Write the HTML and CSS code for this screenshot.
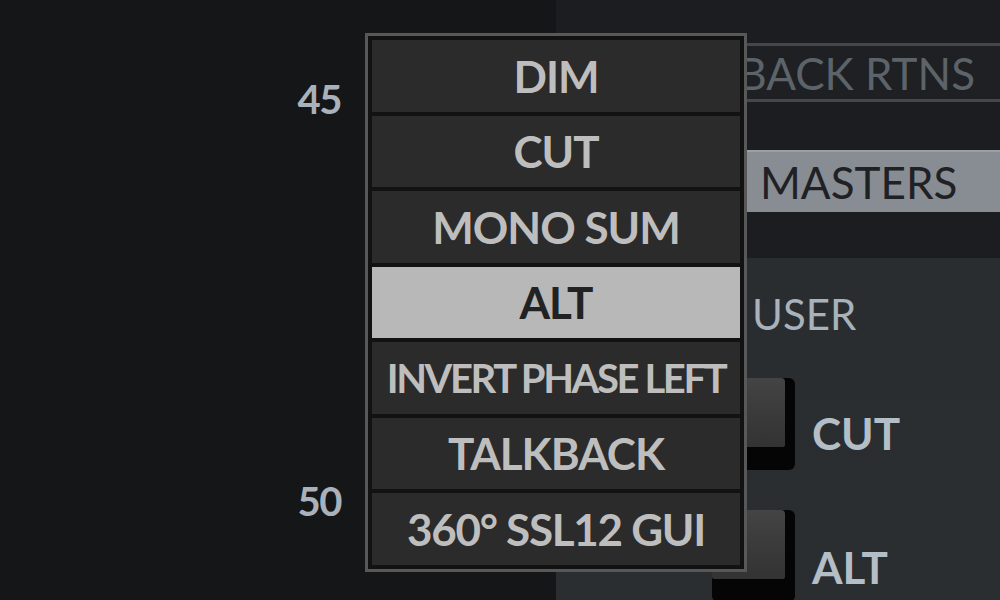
FILE: index.html
```html
<!DOCTYPE html>
<html>
<head>
<meta charset="utf-8">
<link rel="stylesheet" href="styles.css">
</head>
<body>
<div class="screen">
  <div class="scale">
    <div class="tick tick-45">45</div>
    <div class="tick tick-50">50</div>
  </div>
  <div class="panel">
    <div class="top-gap"></div>
    <div class="bar bar-rtns">TALKBACK RTNS</div>
    <div class="mid-gap"></div>
    <div class="bar bar-masters">MASTERS</div>
    <div class="mid-gap2"></div>
    <div class="user-area">
      <div class="user-label">USER</div>
      <div class="btn-row row-cut">
        <div class="hw-btn"><div class="hw-face"></div></div>
        <div class="btn-label">CUT</div>
      </div>
      <div class="btn-row row-alt">
        <div class="hw-btn"><div class="hw-face"></div></div>
        <div class="btn-label">ALT</div>
      </div>
    </div>
  </div>
  <div class="menu">
    <div class="item">DIM</div>
    <div class="item">CUT</div>
    <div class="item">MONO SUM</div>
    <div class="item selected">ALT</div>
    <div class="item fit">INVERT PHASE LEFT</div>
    <div class="item">TALKBACK</div>
    <div class="item tight">360° SSL12 GUI</div>
  </div>
</div>
</body>
</html>
```
FILE: styles.css
```css
html, body {
  margin: 0;
  padding: 0;
  background: #151618;
}
.screen {
  position: relative;
  width: 1000px;
  height: 600px;
  overflow: hidden;
  display: flex;
  font-family: Lato, "Liberation Sans", sans-serif;
}
.scale {
  width: 556px;
  flex: none;
  background: #151618;
  display: flex;
  flex-direction: column;
  align-items: flex-end;
  padding-right: 215px;
  box-sizing: border-box;
}
.tick {
  color: #a9b2ba;
  font-weight: 700;
  font-size: 40px;
  line-height: 40px;
  letter-spacing: -1.5px;
}
.tick-45 { margin-top: 79px; }
.tick-50 { margin-top: 362px; }
.panel {
  flex: 1;
  display: flex;
  flex-direction: column;
  background: #1c1d20;
}
.top-gap { height: 43px; flex: none; }
.bar {
  flex: none;
  box-sizing: border-box;
  display: flex;
  align-items: center;
  font-size: 44px;
  font-weight: 400;
}
.bar-rtns {
  height: 59px;
  border-top: 3px solid #43484d;
  border-bottom: 3px solid #43484d;
  background: #1e2023;
  color: #5c6369;
  justify-content: flex-end;
  padding-right: 25px;
}
.mid-gap { height: 48px; flex: none; }
.bar-masters {
  height: 62px;
  background: #878d93;
  color: #1f2124;
  padding-left: 204px;
  border-top: 2px solid #9aa0a6;
}
.mid-gap2 { height: 46px; flex: none; }
.user-area {
  flex: 1;
  background: linear-gradient(180deg, #2a2d30 0%, #2b2e31 100%);
  display: flex;
  flex-direction: column;
  padding-left: 156px;
}
.user-label {
  color: #a8b2ba;
  font-size: 42px;
  font-weight: 400;
  line-height: 42px;
  margin-top: 35px;
  margin-left: 40px;
}
.btn-row {
  display: flex;
  align-items: flex-start;
  gap: 17px;
}
.row-cut { margin-top: 43px; }
.row-alt { margin-top: 40px; }
.hw-btn {
  width: 83px;
  height: 92px;
  background: #050505;
  border-radius: 6px;
  flex: none;
}
.hw-face {
  width: 73px;
  height: 69px;
  background: linear-gradient(180deg, #444 0%, #393939 60%, #333 100%);
  border-radius: 4px 4px 2px 2px;
}
.btn-label {
  color: #b4bec6;
  font-size: 44px;
  font-weight: 700;
  line-height: 44px;
  margin-top: 33px;
}
.row-alt .btn-label { margin-top: 35px; }
.menu {
  position: absolute;
  left: 365px;
  top: 33px;
  width: 368px;
  border: 3px solid #585858;
  background: #121212;
  padding: 4px;
  display: flex;
  flex-direction: column;
  gap: 4px;
  box-sizing: content-box;
}
.item {
  height: 71.5px;
  background: #2b2b2b;
  color: #bebebe;
  font-weight: 700;
  font-size: 44px;
  display: flex;
  align-items: center;
  justify-content: center;
  white-space: nowrap;
  letter-spacing: -1px;
}
.item.fit {
  font-size: 40px;
  letter-spacing: -2.4px;
}
.item.tight {
  letter-spacing: -1.3px;
}
.item.selected {
  background: #b8b8b8;
  color: #222;
}
```
